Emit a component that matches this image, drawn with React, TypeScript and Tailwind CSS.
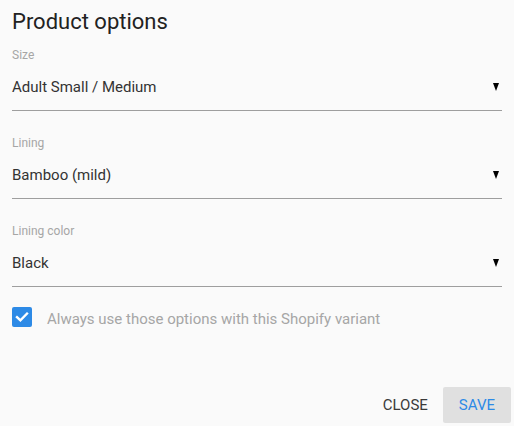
import React from "react";

function Field({ label, value }: { label: string; value: string }) {
  return (
    <div className="flex flex-col">
      <div className="text-[12px] leading-[16px] h-[16px] text-[#a6a6a6]">{label}</div>
      <div className="mt-[14px] flex items-start justify-between border-b border-[#9e9e9e] pb-[13px]">
        <span className="text-[15px] leading-[20px] h-[20px] text-[#333333]">{value}</span>
        <svg width="6" height="8" viewBox="0 0 6 8" className="mt-[6px] mr-[3px]">
          <path d="M0 0 H6 L3 8 Z" fill="#000" />
        </svg>
      </div>
    </div>
  );
}

export default function App() {
  return (
    <div
      className="w-[514px] h-[426px] bg-[#fafafa] flex flex-col px-3 pt-2"
      style={{ fontFamily: "Roboto, 'Liberation Sans', sans-serif" }}
    >
      <h1 className="text-[22px] leading-[28px] h-[28px] text-[#222222] font-normal">Product options</h1>
      <div className="mt-[11px] flex flex-col gap-[24px]">
        <Field label="Size" value="Adult Small / Medium" />
        <Field label="Lining" value="Bamboo (mild)" />
        <Field label="Lining color" value="Black" />
      </div>
      <div className="mt-[20px] flex items-start">
        <div className="w-[20px] h-[20px] rounded-[2px] bg-[#2d8ae6] flex items-center justify-center">
          <svg width="20" height="20" viewBox="0 0 20 20">
            <path d="M5 10.2 L8.4 13.4 L15 6.6" stroke="#fff" strokeWidth="2.4" fill="none" strokeLinecap="square" />
          </svg>
        </div>
        <span className="ml-[15px] mt-[2px] text-[15px] leading-[20px] text-[#a6a6a6]">
          Always use those options with this Shopify variant
        </span>
      </div>
      <div className="mt-[58px] flex justify-end mr-[-9px]">
        <button className="h-[36px] px-[8px] text-[15px] text-[#3a3a3a] uppercase">Close</button>
        <button className="ml-[7px] h-[36px] px-[16px] rounded-[2px] bg-[#e0e0e0] text-[15px] text-[#2d8ae6] uppercase">
          Save
        </button>
      </div>
    </div>
  );
}
